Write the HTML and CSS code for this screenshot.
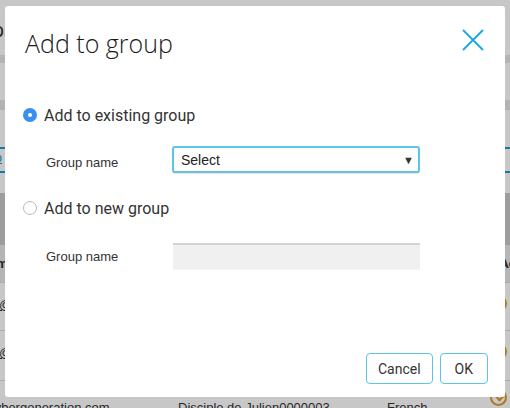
FILE: index.html
```html
<!DOCTYPE html>
<html>
<head>
<meta charset="utf-8">
<link rel="stylesheet" href="styles.css">
</head>
<body>
<div class="page">
  <div class="bg">
    <div class="bg-top"><span class="bg-title">Groups</span></div>
    <div class="bg-band h8"></div>
    <div class="bg-row h37"></div>
    <div class="bg-band h10"></div>
    <div class="bg-row h37"></div>
    <div class="bg-tabs"><span class="bg-link">Group</span></div>
    <div class="bg-row h20"></div>
    <div class="bg-head"></div>
    <div class="bg-row h37 grey2"><span class="bg-colname">Nom</span><span class="bg-colname right">Action</span></div>
    <div class="bg-row h48 line"><span class="bg-cell u">info@cybergeneration.com</span><span class="chev"></span></div>
    <div class="bg-row h50 line"><span class="bg-cell u">info@cybergeneration.com</span><span class="chev"></span></div>
    <div class="bg-row h40 line last"><span class="bg-cell">info@cybergeneration.com</span><span class="bg-cell c2">Disciple de Julien0000003</span><span class="bg-cell c3">French</span><span class="chev"></span></div>
  </div>
  <div class="overlay"></div>
  <div class="modal">
    <div class="modal-head">
      <h1 class="title">Add to group</h1>
      <svg class="close" width="22" height="22" viewBox="0 0 22 22"><path d="M1 1 L21 21 M21 1 L1 21" stroke="#1fa9df" stroke-width="2" fill="none"/></svg>
    </div>
    <div class="modal-body">
      <div class="option">
        <span class="radio checked"></span>
        <span class="opt-label">Add to existing group</span>
      </div>
      <div class="field f1">
        <span class="field-label">Group name</span>
        <div class="select"><span>Select</span><span class="arrow">&#9660;</span></div>
      </div>
      <div class="option">
        <span class="radio"></span>
        <span class="opt-label">Add to new group</span>
      </div>
      <div class="field">
        <span class="field-label">Group name</span>
        <div class="input"></div>
      </div>
    </div>
    <div class="modal-foot">
      <button class="btn">Cancel</button>
      <button class="btn btn-ok">OK</button>
    </div>
  </div>
</div>
</body>
</html>
```

FILE: styles.css
```css
* { box-sizing: border-box; }
html, body { margin: 0; padding: 0; }
body { font-family: Roboto, "Liberation Sans", sans-serif; }

.page {
  position: relative;
  width: 510px;
  height: 408px;
  overflow: hidden;
  background: #fff;
}

.bg { display: flex; flex-direction: column; width: 510px; }
.bg-top { height: 55px; position: relative; }
.bg-title { position: absolute; left: -50px; top: 18px; font-size: 20px; color: #333; }
.bg-band { background: #e6e6e6; }
.bg-row { position: relative; }
.h8 { height: 8px; }
.h10 { height: 10px; }
.h20 { height: 20px; }
.h37 { height: 37px; }
.h40 { height: 40px; }
.h48 { height: 48px; }
.h50 { height: 50px; }
.line { border-top: 1px solid #ddd; }
.bg-tabs {
  position: relative;
  height: 26px;
  border-top: 2px solid #1a9ad0;
  border-bottom: 2px solid #1a9ad0;
}
.bg-head { height: 52px; background: #cacaca; }
.grey2 { background: #e8e8e8; }
.bg-link { position: absolute; left: -33px; top: 1px; color: #1a9ad0; font-size: 13px; text-decoration: underline; }
.bg-colname { position: absolute; left: -20px; top: 11px; font-size: 13px; font-weight: bold; color: #333; }
.bg-colname.right { left: 500px; }
.bg-cell { position: absolute; left: -22px; top: 14px; font-size: 13px; color: #333; font-family: "Liberation Sans", sans-serif; }
.bg-cell.u { text-decoration: underline; }
.last .bg-cell { top: 19px; left: -46px; }
.last .bg-cell.c2 { left: 178px; }
.last .bg-cell.c3 { left: 387px; }
.chev {
  position: absolute;
  left: 490px;
  top: 12px;
  width: 17px;
  height: 17px;
  border: 2px solid #e09a2a;
  border-radius: 50%;
}
.chev::after {
  content: "";
  position: absolute;
  left: 4px;
  top: 2px;
  width: 5px;
  height: 5px;
  border-right: 2px solid #e09a2a;
  border-bottom: 2px solid #e09a2a;
  transform: rotate(45deg);
}
.last .chev { top: 8px; }

.overlay {
  position: absolute;
  inset: 0;
  background: rgba(0, 0, 0, 0.22);
}

.modal {
  position: absolute;
  left: 5px;
  top: 6px;
  width: 500px;
  height: 391px;
  background: #fff;
  border-radius: 3px;
  display: flex;
  flex-direction: column;
}

.modal-head {
  display: flex;
  justify-content: space-between;
  align-items: flex-start;
  padding: 22px 21px 0 20px;
  height: 94px;
}
.title {
  margin: 0;
  font-family: "Open Sans", sans-serif;
  font-weight: 300;
  font-size: 25px;
  line-height: 30px;
  color: #1a1a1a;
}
.close { margin-top: 1px; }

.modal-body {
  display: flex;
  flex-direction: column;
  padding: 0 0 0 18px;
}
.option {
  display: flex;
  align-items: center;
  gap: 7px;
  height: 30px;
}
.radio {
  width: 14px;
  height: 14px;
  border-radius: 50%;
  border: 1px solid #bbb;
  background: #fff;
  position: relative;
}
.radio.checked {
  border: none;
  background: #3b8ff0;
}
.radio.checked::after {
  content: "";
  position: absolute;
  left: 5px; top: 5px;
  width: 4px; height: 4px;
  border-radius: 50%;
  background: #fff;
}
.opt-label {
  font-size: 16px;
  color: #333;
}
.field {
  display: flex;
  align-items: center;
  height: 64px;
  padding-left: 23px;
}
.field.f1 {
  height: 63px;
  padding-bottom: 4px;
}
.field-label {
  width: 126px;
  font-family: "Liberation Sans", sans-serif;
  font-size: 13px;
  color: #333;
  padding-top: 2px;
}
.f1 .field-label { padding-top: 5px; }
.select {
  width: 248px;
  height: 27px;
  border: 2px solid #5bc6e6;
  border-radius: 3px;
  box-shadow: 0 1px 1px rgba(240, 150, 130, 0.35);
  display: flex;
  align-items: center;
  justify-content: space-between;
  padding: 0 4px 0 7px;
  font-family: "Liberation Sans", sans-serif;
  font-size: 14px;
  color: #222;
}
.arrow { font-size: 11px; color: #333; }
.input {
  width: 247px;
  height: 27px;
  margin-left: 1px;
  margin-top: 3px;
  background: #f0f0f0;
  border-top: 2px solid #d2d2d2;
  border-bottom: 1px solid #f5f5f5;
}

.modal-foot {
  margin-top: auto;
  display: flex;
  justify-content: flex-end;
  gap: 7px;
  padding: 0 17px 13px 0;
}
.btn {
  height: 31px;
  border: 1.5px solid #5bc6e6;
  border-radius: 4px;
  background: #fff;
  font-family: Roboto, sans-serif;
  font-size: 14px;
  color: #333;
  padding: 0 11px;
}
.btn-ok { padding: 0 14px; }
```
